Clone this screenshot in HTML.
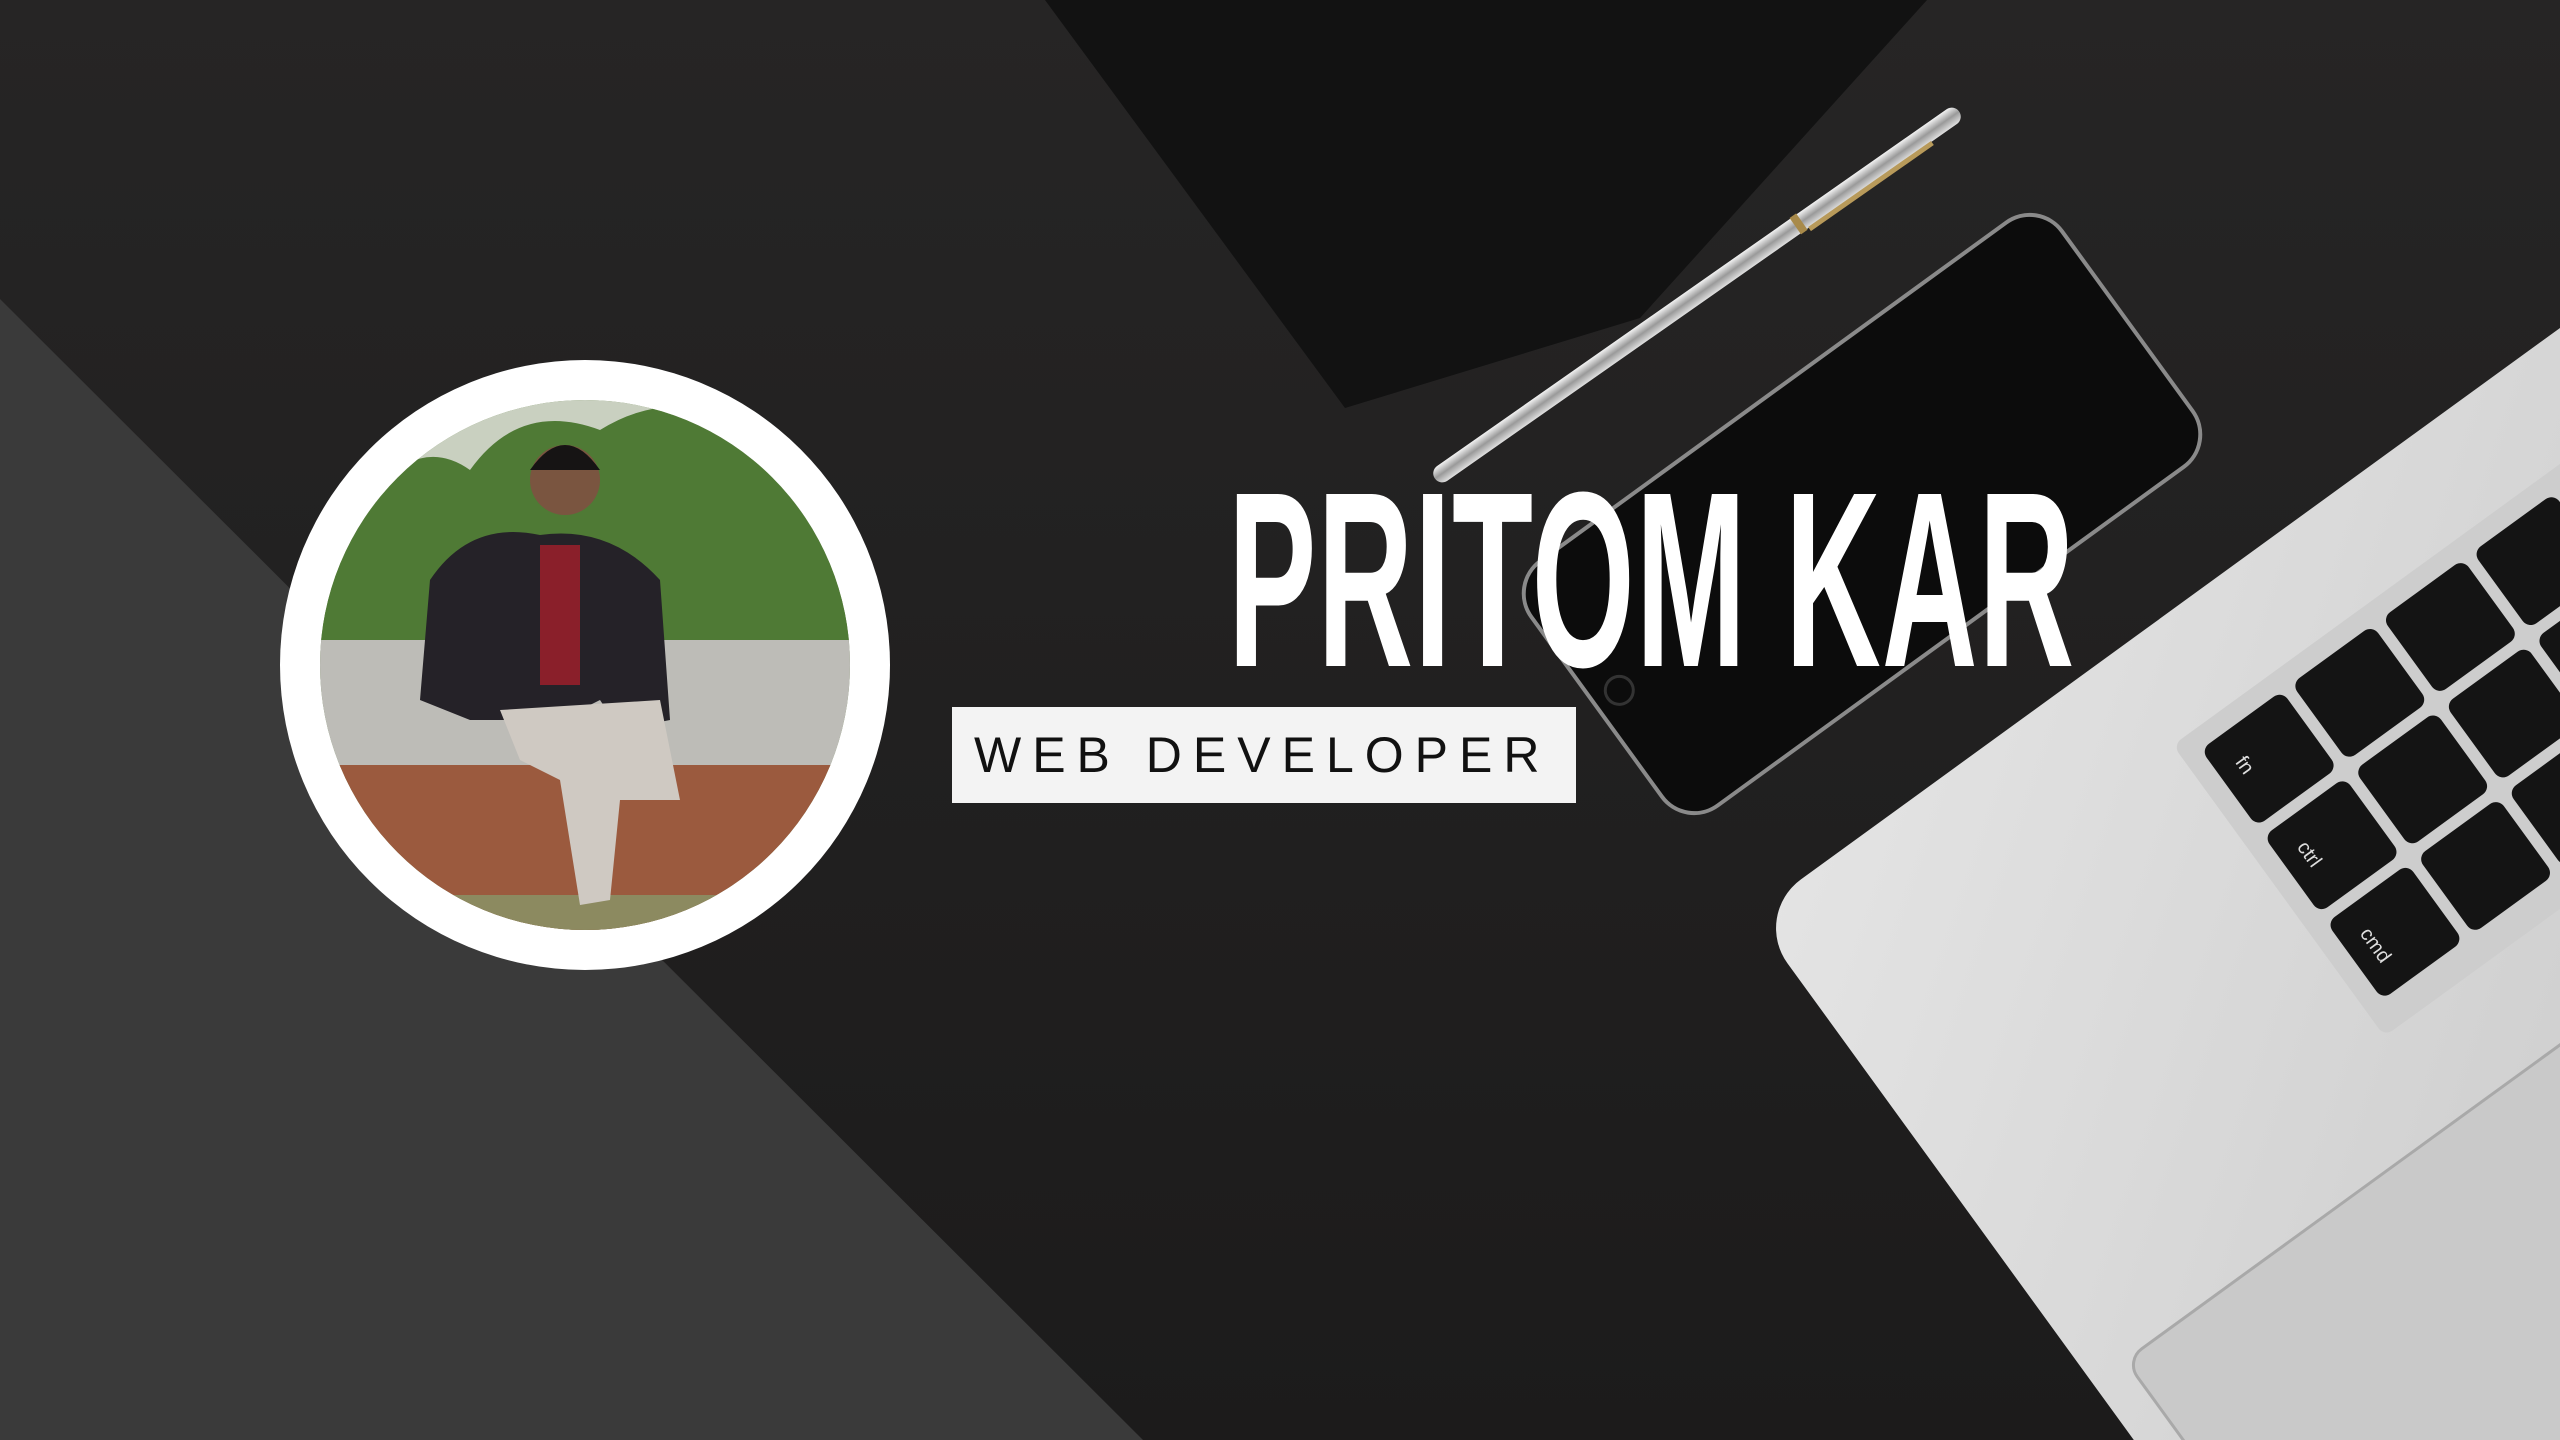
<!DOCTYPE html>
<html><head><meta charset="utf-8"><style>
html,body{margin:0;padding:0;width:2560px;height:1440px;overflow:hidden;background:#1f1e1e}
#w{position:relative;width:2560px;height:1440px;overflow:hidden}
.t{position:absolute;left:1228px;top:455px;font-family:"Liberation Sans",sans-serif;font-weight:bold;font-size:250px;color:#fff;transform:scaleX(.53);transform-origin:0 0;white-space:nowrap;line-height:1;letter-spacing:2px}
.b{position:absolute;left:952px;top:707px;width:624px;height:96px;background:#f3f3f3;font-family:"Liberation Sans",sans-serif;font-size:50px;letter-spacing:11px;color:#111;line-height:96px;text-indent:22px;white-space:nowrap}
</style></head><body><div id="w">
<svg width="2560" height="1440" style="position:absolute;left:0;top:0;overflow:hidden">
<defs>
<linearGradient id="bg" x1="0" y1="0" x2="0" y2="1"><stop offset="0" stop-color="#262525"/><stop offset="1" stop-color="#1c1b1b"/></linearGradient>
<linearGradient id="lap" x1="0" y1="0" x2="1" y2="1"><stop offset="0" stop-color="#e4e4e4"/><stop offset="1" stop-color="#bdbdbd"/></linearGradient>
<linearGradient id="pen" x1="0" y1="0" x2="0" y2="1"><stop offset="0" stop-color="#f2f2f2"/><stop offset=".5" stop-color="#9a9a9a"/><stop offset="1" stop-color="#e0e0e0"/></linearGradient>
<clipPath id="cp"><circle cx="585" cy="665" r="265"/></clipPath>
</defs>
<rect width="2560" height="1440" fill="url(#bg)"/>
<polygon points="0,299 1143,1440 0,1440" fill="#3a3a3a"/>
<polygon points="1045,0 1927,0 1640,318 1345,408" fill="#121212"/>
<g transform="translate(1862,514) rotate(-36)">
<rect x="-328" y="-151" width="656" height="302" rx="40" fill="#0c0c0c" stroke="#8a8a8a" stroke-width="4"/>
<circle cx="-300" cy="0" r="14" fill="none" stroke="#333" stroke-width="3"/>
</g>
<g transform="translate(1697,295) rotate(-35)">
<rect x="-320" y="-9" width="640" height="18" rx="9" fill="url(#pen)"/>
<rect x="120" y="-10" width="8" height="20" fill="#a88a4a"/>
<rect x="130" y="8" width="150" height="5" fill="#b89a5a"/>
</g>
<g transform="translate(1764,931) rotate(-36)">
<rect x="0" y="-20" width="1400" height="1000" rx="60" fill="url(#lap)"/>
<rect x="440" y="90" width="1000" height="360" rx="10" fill="#cdcdcd"/>
<g fill="#141414">
<rect x="460" y="110" width="100" height="95" rx="10"/><rect x="572" y="110" width="100" height="95" rx="10"/><rect x="684" y="110" width="100" height="95" rx="10"/><rect x="796" y="110" width="100" height="95" rx="10"/><rect x="908" y="110" width="100" height="95" rx="10"/>
<rect x="460" y="217" width="100" height="95" rx="10"/><rect x="572" y="217" width="100" height="95" rx="10"/><rect x="684" y="217" width="100" height="95" rx="10"/><rect x="796" y="217" width="100" height="95" rx="10"/><rect x="908" y="217" width="100" height="95" rx="10"/>
<rect x="460" y="324" width="100" height="95" rx="10"/><rect x="572" y="324" width="100" height="95" rx="10"/><rect x="684" y="324" width="120" height="95" rx="10"/><rect x="816" y="324" width="400" height="95" rx="10"/>
</g>
<g fill="#ddd" font-family="Liberation Sans,sans-serif" font-size="20">
<text x="480" y="140" transform="rotate(90 480 140)">fn</text>
<text x="480" y="245" transform="rotate(90 480 245)">ctrl</text>
<text x="480" y="352" transform="rotate(90 480 352)">cmd</text>
</g>
<rect x="40" y="560" width="900" height="500" rx="20" fill="#c9c9c9" stroke="#a9a9a9" stroke-width="3"/>
</g>
<circle cx="585" cy="665" r="305" fill="#fff"/>
<g clip-path="url(#cp)">
<rect x="300" y="380" width="580" height="560" fill="#6f8a52"/>
<rect x="300" y="380" width="580" height="180" fill="#c9d0c0"/>
<path d="M330 560 Q400 420 470 470 Q520 400 600 430 Q680 380 760 440 Q820 420 880 500 L880 640 L300 640Z" fill="#4f7a35"/>
<rect x="300" y="640" width="580" height="125" fill="#bdbcb7"/>
<rect x="300" y="765" width="580" height="180" fill="#9b5a3e"/>
<rect x="300" y="895" width="580" height="60" fill="#8c8a60"/>
<path d="M430 580 Q470 520 540 535 Q610 525 660 580 L670 720 L620 730 L600 700 L560 720 L470 720 L420 700Z" fill="#252228"/>
<rect x="540" y="545" width="40" height="140" fill="#8a1f2a"/>
<path d="M500 710 L660 700 L680 800 L620 800 L610 900 L580 905 L560 780 L520 760Z" fill="#cfc9c2"/>
<circle cx="565" cy="480" r="35" fill="#7a5540"/>
<path d="M530 470 Q565 420 600 470 Z" fill="#161414"/>
</g>
</svg>
<div class="t">PRITOM KAR</div>
<div class="b">WEB DEVELOPER</div>
</div></body></html>
